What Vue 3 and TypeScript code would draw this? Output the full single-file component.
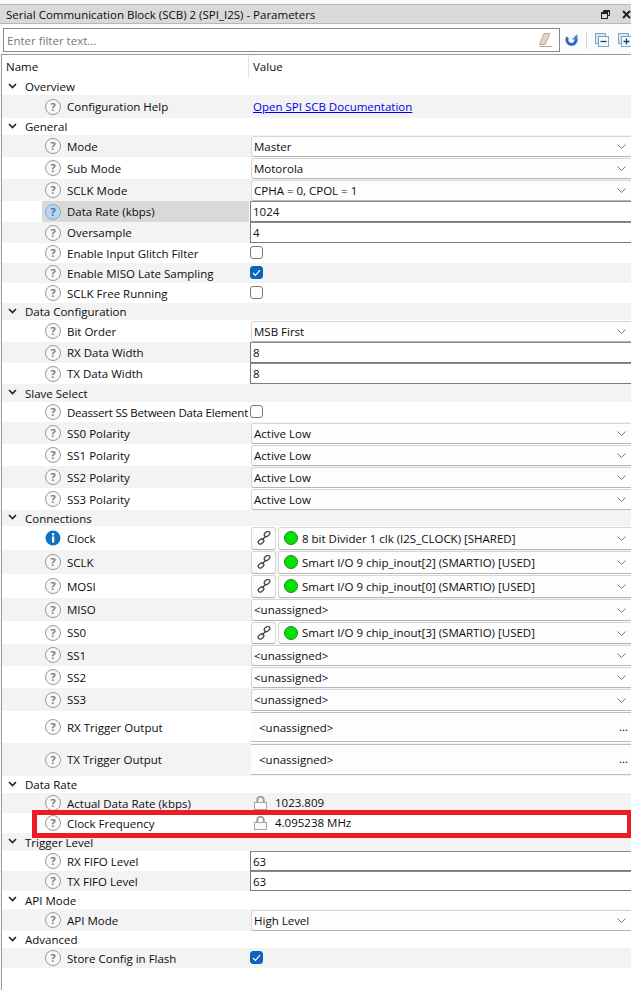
<script setup lang="ts">
type Row = {
  kind: 'group' | 'link' | 'select' | 'input' | 'check' | 'pin' | 'trigger' | 'locked'
  label: string
  h: number
  value?: string
  checked?: boolean
  icon?: 'info'
  selected?: boolean
  marked?: boolean
  tight?: boolean
}

const rows: Row[] = [
  { kind: 'group', label: 'Overview', h: 17 },
  { kind: 'link', label: 'Configuration Help', h: 23, value: 'Open SPI SCB Documentation' },
  { kind: 'group', label: 'General', h: 17 },
  { kind: 'select', label: 'Mode', h: 22, value: 'Master' },
  { kind: 'select', label: 'Sub Mode', h: 22, value: 'Motorola' },
  { kind: 'select', label: 'SCLK Mode', h: 22, value: 'CPHA = 0, CPOL = 1' },
  { kind: 'input', label: 'Data Rate (kbps)', h: 21, value: '1024', selected: true },
  { kind: 'input', label: 'Oversample', h: 21, value: '4' },
  { kind: 'check', label: 'Enable Input Glitch Filter', h: 20 },
  { kind: 'check', label: 'Enable MISO Late Sampling', h: 20, checked: true },
  { kind: 'check', label: 'SCLK Free Running', h: 20 },
  { kind: 'group', label: 'Data Configuration', h: 17 },
  { kind: 'select', label: 'Bit Order', h: 22, value: 'MSB First' },
  { kind: 'input', label: 'RX Data Width', h: 21, value: '8' },
  { kind: 'input', label: 'TX Data Width', h: 21, value: '8' },
  { kind: 'group', label: 'Slave Select', h: 18 },
  { kind: 'check', label: 'Deassert SS Between Data Element', h: 20, tight: true },
  { kind: 'select', label: 'SS0 Polarity', h: 22, value: 'Active Low' },
  { kind: 'select', label: 'SS1 Polarity', h: 22, value: 'Active Low' },
  { kind: 'select', label: 'SS2 Polarity', h: 22, value: 'Active Low' },
  { kind: 'select', label: 'SS3 Polarity', h: 22, value: 'Active Low' },
  { kind: 'group', label: 'Connections', h: 16 },
  { kind: 'pin', label: 'Clock', h: 24, value: '8 bit Divider 1 clk (I2S_CLOCK) [SHARED]', icon: 'info' },
  { kind: 'pin', label: 'SCLK', h: 24, value: 'Smart I/O 9 chip_inout[2] (SMARTIO) [USED]' },
  { kind: 'pin', label: 'MOSI', h: 24, value: 'Smart I/O 9 chip_inout[0] (SMARTIO) [USED]' },
  { kind: 'select', label: 'MISO', h: 23, value: '<unassigned>' },
  { kind: 'pin', label: 'SS0', h: 23, value: 'Smart I/O 9 chip_inout[3] (SMARTIO) [USED]' },
  { kind: 'select', label: 'SS1', h: 22, value: '<unassigned>' },
  { kind: 'select', label: 'SS2', h: 22, value: '<unassigned>' },
  { kind: 'select', label: 'SS3', h: 23, value: '<unassigned>' },
  { kind: 'trigger', label: 'RX Trigger Output', h: 32, value: '<unassigned>' },
  { kind: 'trigger', label: 'TX Trigger Output', h: 33, value: '<unassigned>' },
  { kind: 'group', label: 'Data Rate', h: 17 },
  { kind: 'locked', label: 'Actual Data Rate (kbps)', h: 20, value: '1023.809' },
  { kind: 'locked', label: 'Clock Frequency', h: 20, value: '4.095238 MHz', marked: true },
  { kind: 'group', label: 'Trigger Level', h: 18 },
  { kind: 'input', label: 'RX FIFO Level', h: 20, value: '63' },
  { kind: 'input', label: 'TX FIFO Level', h: 20, value: '63' },
  { kind: 'group', label: 'API Mode', h: 18 },
  { kind: 'select', label: 'API Mode', h: 22, value: 'High Level' },
  { kind: 'group', label: 'Advanced', h: 17 },
  { kind: 'check', label: 'Store Config in Flash', h: 20, checked: true },
]
</script>

<template>
  <div class="panel">
    <header class="title">
      <span>Serial Communication Block (SCB) 2 (SPI_I2S) - Parameters</span>
      <span class="title-icons">
        <svg width="9" height="9" viewBox="0 0 9 9" fill="none" stroke="#222">
          <path d="M2.5 2.5V0.5h6v5H6.5" />
          <path d="M2.5 1.5h6" stroke-width="1" />
          <rect x="0.5" y="2.5" width="6" height="6" fill="#d9d9d9" />
          <path d="M0.5 3.5h6" />
        </svg>
        <svg width="9" height="9" viewBox="0 0 9 9" fill="none" stroke="#222" stroke-width="2">
          <path d="M1 1l7 7M8 1l-7 7" />
        </svg>
      </span>
    </header>

    <div class="toolbar">
      <div class="filter">
        <span>Enter filter text...</span>
        <svg width="16" height="15" viewBox="0 0 16 15">
          <path d="M6 0.5h6l-5 11H1.5z" fill="#e3d6c6" stroke="#b9a68e" />
          <path d="M1.5 13.5h13" stroke="#b9a68e" />
        </svg>
      </div>
      <svg class="tool" width="13" height="13" viewBox="0 0 13 13" fill="none">
        <path d="M2.6 3.4a4.6 4.6 0 1 0 7.6-.4" stroke="#2f66c8" stroke-width="3" />
        <path d="M12.4 0v5.6H6.8z" fill="#4a80dc" />
      </svg>
      <i class="sep" />
      <svg class="tool" width="14" height="14" viewBox="0 0 14 14">
        <rect x="0.5" y="0.5" width="10" height="10" fill="#d6e6f5" stroke="#7ca3c8" />
        <rect x="3.5" y="3.5" width="10" height="10" fill="#f4f9fd" stroke="#7ca3c8" />
        <path d="M5.5 8.5h6" stroke="#17416b" stroke-width="1.3" />
      </svg>
      <svg class="tool tool-last" width="14" height="14" viewBox="0 0 14 14">
        <rect x="0.5" y="0.5" width="10" height="10" fill="#d6e6f5" stroke="#7ca3c8" />
        <rect x="3.5" y="3.5" width="10" height="10" fill="#f4f9fd" stroke="#7ca3c8" />
        <path d="M5.5 8.5h6M8.5 5.5v6" stroke="#17416b" stroke-width="1.3" />
      </svg>
    </div>

    <div class="tree">
      <div class="tree-head">
        <span class="head-name">Name</span>
        <span class="head-value">Value</span>
      </div>

      <div
        v-for="(row, i) in rows"
        :key="i"
        class="row"
        :class="{ group: row.kind === 'group', odd: i % 2 === 1 }"
        :style="{ height: row.h + 'px' }"
      >
        <template v-if="row.kind === 'group'">
          <svg class="chevron" width="9" height="6" viewBox="0 0 9 6" fill="none" stroke="#222" stroke-width="1.6">
            <path d="M1 1l3.5 3.5L8 1" />
          </svg>
          <span class="group-label">{{ row.label }}</span>
        </template>

        <template v-else>
          <div class="name" :class="{ selected: row.selected }">
            <svg v-if="row.icon === 'info'" class="help" width="16" height="16" viewBox="0 0 16 16">
              <circle cx="8" cy="8" r="7.5" fill="#0f74bd" />
              <rect x="7" y="6.5" width="2.2" height="6" fill="#fff" />
              <rect x="7" y="3.2" width="2.2" height="2.2" fill="#fff" />
            </svg>
            <span v-else class="help q" :class="{ active: row.selected }">?</span>
            <span class="name-text" :class="{ tight: row.tight }">{{ row.label }}</span>
          </div>

          <div class="value">
            <a v-if="row.kind === 'link'" class="doc-link">{{ row.value }}</a>

            <div v-else-if="row.kind === 'select'" class="select">
              <span>{{ row.value }}</span>
              <svg class="drop" width="9" height="5" viewBox="0 0 9 5" fill="none" stroke="#777"><path d="M0.5 0.5l4 4 4-4" /></svg>
            </div>

            <div v-else-if="row.kind === 'input'" class="input">{{ row.value }}</div>

            <span v-else-if="row.kind === 'check'" class="check" :class="{ on: row.checked }">
              <svg v-if="row.checked" width="9" height="8" viewBox="0 0 9 8" fill="none" stroke="#fff" stroke-width="1.2">
                <path d="M1 4l2.4 2.4L8 1.2" />
              </svg>
            </span>

            <div v-else-if="row.kind === 'pin'" class="pin">
              <button class="pin-btn">
                <svg width="14" height="14" viewBox="0 0 14 14" fill="none" stroke="#444" stroke-width="1.3">
                  <rect x="7" y="1" width="6" height="4" rx="2" transform="rotate(-38 10 3)" />
                  <rect x="1" y="8.5" width="6" height="4" rx="2" transform="rotate(-38 4 10.5)" />
                  <path d="M5 9l4-4" />
                </svg>
              </button>
              <div class="select">
                <i class="dot" />
                <span>{{ row.value }}</span>
                <svg class="drop" width="9" height="5" viewBox="0 0 9 5" fill="none" stroke="#777"><path d="M0.5 0.5l4 4 4-4" /></svg>
              </div>
            </div>

            <div v-else-if="row.kind === 'trigger'" class="trigger">
              <span>{{ row.value }}</span>
              <span class="dots">...</span>
            </div>

            <div v-else class="locked">
              <svg width="15" height="14" viewBox="0 0 15 14">
                <path d="M4.2 7V4a3.3 3.3 0 0 1 6.6 0v3" fill="none" stroke="#999" stroke-width="1.8" />
                <rect x="1.5" y="6.5" width="12" height="7" fill="#fafafa" stroke="#a4a4a4" />
              </svg>
              <span>{{ row.value }}</span>
            </div>
          </div>

          <i v-if="row.marked" class="red-box" />
        </template>
      </div>
    </div>
  </div>
</template>

<style scoped>
.panel {
  width: 631px;
  height: 990px;
  overflow: hidden;
  background: #f9f9f9;
  font-family: "Open Sans", "Noto Sans", sans-serif;
  font-size: 11.5px;
  color: #0c0c0c;
  padding-top: 4px;
  box-sizing: border-box;
  display: flex;
  flex-direction: column;
}

.title {
  height: 20px;
  flex: none;
  box-sizing: border-box;
  background: #d9d9d9;
  border-top: 1px solid #b8b8b8;
  border-bottom: 1px solid #b8b8b8;
  padding-left: 6px;
  display: flex;
  align-items: center;
  justify-content: space-between;
  white-space: nowrap;
}

.title-icons {
  display: flex;
  gap: 12px;
}

.toolbar {
  height: 30px;
  flex: none;
  box-sizing: border-box;
  padding: 4px 0 2px 3px;
  display: flex;
  align-items: center;
  background: #fbfbfb;
}

.filter {
  width: 558px;
  height: 24px;
  box-sizing: border-box;
  border: 1px solid #858a90;
  background: #fff;
  color: #777;
  padding: 0 5px 0 3px;
  display: flex;
  align-items: center;
  justify-content: space-between;
}

.tool { flex: none; margin-left: 5px; }
.tool-last { margin-left: 9px; margin-right: -1px; }

.sep {
  width: 1px;
  height: 18px;
  background: #d4d4d4;
  margin-left: 8px;
  margin-right: 3px;
}

.tree {
  flex: 1;
  margin-left: 1px;
  border-top: 1px solid #9a9a9a;
  border-left: 1px solid #9a9a9a;
  background: #fff;
}

.tree-head {
  height: 23px;
  display: flex;
  align-items: center;
}

.head-name {
  width: 247px;
  padding-left: 4px;
  box-sizing: border-box;
  height: 100%;
  line-height: 23px;
  border-right: 1px solid #e3e3e3;
}

.head-value { padding-left: 4px; }

.row {
  position: relative;
  display: flex;
  align-items: center;
  padding-left: 40px;
  white-space: nowrap;
}

.row.group { padding-left: 20px; }

.row.odd { background-image: linear-gradient(#f3f3f3, #f3f3f3); }

.chevron {
  position: absolute;
  left: 6px;
  top: 50%;
  margin-top: -4px;
}

.group-label { padding-left: 3px; }

.name {
  width: 207px;
  flex: none;
  height: 100%;
  display: flex;
  align-items: center;
  padding-left: 3px;
  box-sizing: border-box;
}

.name.selected { background: #d9d9d9; }

.help { flex: none; width: 16px; height: 16px; }

.q {
  box-sizing: border-box;
  border: 1.5px solid #999;
  border-radius: 50%;
  background: #f8f8f8;
  color: #7c7c7c;
  font-weight: 700;
  font-size: 11px;
  line-height: 13px;
  text-align: center;
}

.q.active {
  background: #b7d6f4;
  border-color: #8fa9c6;
  color: #4d6f92;
}

.name-text { margin-left: 6px; }
.name-text.tight { letter-spacing: -0.22px; }

.value {
  flex: 1;
  min-width: 0;
  height: 100%;
  display: flex;
  align-items: center;
  padding-left: 2px;
  margin-right: -8px;
}

.doc-link {
  color: #0000ee;
  text-decoration: underline;
  padding-left: 2px;
}

.select {
  position: relative;
  flex: 1;
  height: calc(100% - 1px);
  box-sizing: border-box;
  background: #fdfdfd;
  border: 1px solid #d6d6d6;
  border-bottom-color: #b5b5b5;
  border-radius: 3px;
  display: flex;
  align-items: center;
  padding-left: 2px;
}

.drop {
  position: absolute;
  right: 12px;
  top: 50%;
  margin-top: -2px;
}

.input {
  flex: 1;
  height: 100%;
  box-sizing: border-box;
  margin-left: -1px;
  background: #fff;
  border: 1px solid #7a7a7a;
  border-top-color: #8a8a8a;
  padding-left: 2px;
  display: flex;
  align-items: center;
}

.check {
  width: 13px;
  height: 13px;
  margin-left: -1px;
  box-sizing: border-box;
  border: 1px solid #7a7a7a;
  border-radius: 3px;
  background: #fdfdfd;
  display: flex;
  align-items: center;
  justify-content: center;
  margin-top: -1px;
}

.check.on {
  background: #0f62bd;
  border-color: #0f62bd;
}

.pin {
  flex: 1;
  height: calc(100% - 1px);
  display: flex;
  gap: 2px;
}

.pin .select { height: 100%; padding-left: 5px; }

.pin-btn {
  width: 25px;
  height: 100%;
  padding: 0;
  flex: none;
  background: #fdfdfd;
  border: 1px solid #d6d6d6;
  border-bottom-color: #b5b5b5;
  border-radius: 3px;
  display: flex;
  align-items: center;
  justify-content: center;
}

.dot {
  width: 14px;
  height: 14px;
  flex: none;
  box-sizing: border-box;
  border-radius: 50%;
  background: #00e400;
  border: 1px solid #2a7f2a;
  margin-right: 4px;
}

.trigger {
  position: relative;
  flex: 1;
  height: calc(100% - 2px);
  box-sizing: border-box;
  background: #fdfdfd;
  border-top: 1px solid #bcbcbc;
  border-bottom: 1px solid #bcbcbc;
  display: flex;
  align-items: center;
  padding-left: 8px;
}

.dots {
  position: absolute;
  right: 11px;
  top: 6px;
}

.locked {
  display: flex;
  align-items: center;
  gap: 7px;
  padding-left: 2px;
  margin-top: -1px;
}

.red-box {
  position: absolute;
  z-index: 1;
  left: 30px;
  top: -3px;
  right: 0;
  bottom: -5px;
  border: 5px solid #ed1c24;
  border-right-width: 4px;
  pointer-events: none;
}
</style>

<style>
html, body { margin: 0; background: #fff; }
</style>
